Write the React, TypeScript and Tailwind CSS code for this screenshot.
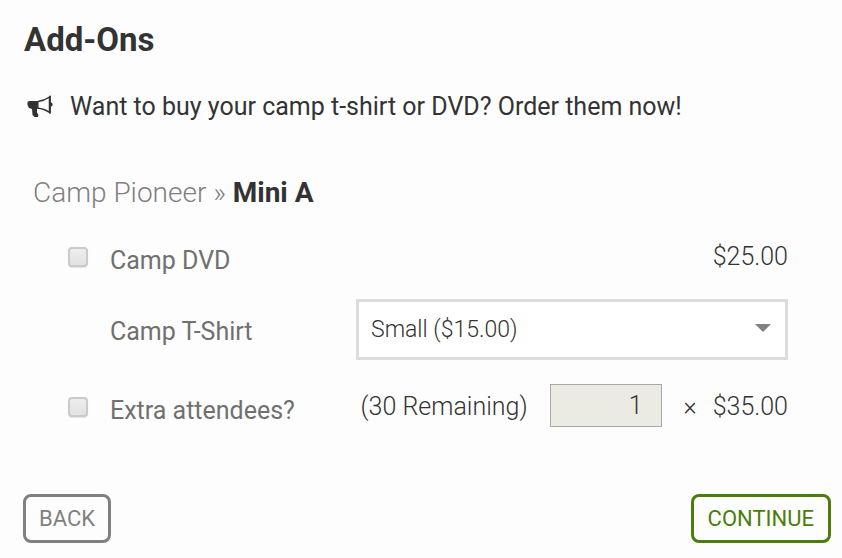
import { useState } from 'react';

const checkboxClass =
  'mt-1.5 h-5 w-5 shrink-0 appearance-none rounded border-2 border-[#cacaca] bg-linear-to-b from-[#ededed] to-[#e2e2e2] shadow-[0_1px_1px_#e4e4e4] checked:border-[#4b7d0c] checked:from-[#4b7d0c] checked:to-[#4b7d0c]';

function MegaphoneIcon() {
  return (
    <svg className="h-6 w-7 shrink-0 text-[#333333]" viewBox="0 0 28 24" fill="none" aria-hidden="true">
      <path
        d="M3 6h9.500v7.500L11 14v3.500l1.500 2.500-.5 2H8.500L6.500 20 6 14l-3-1-1.500-3V7z"
        fill="currentColor"
      />
      <path d="M12 6.500C16.500 6 20 4.500 23.500 2v15.500c-3.500-2.500-7-4-11.500-4.200" stroke="currentColor" strokeWidth="1.500" />
      <path d="M24 .8v17.700" stroke="currentColor" strokeWidth="1.800" />
      <path d="M24.500 7.500h1c1.500.5 1.500 3.500 0 4h-1z" fill="currentColor" />
    </svg>
  );
}

export default function App() {
  const [dvd, setDvd] = useState(false);
  const [extra, setExtra] = useState(false);
  const [shirt, setShirt] = useState('small');
  const [quantity, setQuantity] = useState('1');

  return (
    <main className="min-h-screen bg-[#fdfdfd] pt-5 pr-[11px] pb-3 pl-[23px] font-['Roboto',sans-serif] text-[#333333]">
      <h1 className="pl-px text-[33px] leading-10 font-bold">Add-Ons</h1>

      <p className="mt-7 flex items-center gap-4 pl-[3px] text-[25px] leading-[38px]">
        <MegaphoneIcon />
        Want to buy your camp t-shirt or DVD? Order them now!
      </p>

      <form onSubmit={(e) => e.preventDefault()}>
        <h2 className="mt-[47px] pl-[10px] text-[28px] leading-10 font-light text-[#808080]">
          Camp Pioneer » <strong className="font-bold text-[#333333]">Mini A</strong>
        </h2>

        <div className="pr-[43px] pl-[45px] text-[25px] leading-8">
          {/* Camp DVD */}
          <div className="mt-7 flex items-start justify-between">
            <div className="flex items-start gap-[22px]">
              <input
                id="dvd"
                type="checkbox"
                className={checkboxClass}
                checked={dvd}
                onChange={(e) => setDvd(e.target.checked)}
              />
              <label htmlFor="dvd" className="pt-1 text-[#707070]">
                Camp DVD
              </label>
            </div>
            <span className="font-light">$25.00</span>
          </div>

          {/* Camp T-Shirt */}
          <div className="mt-[22px] flex items-center gap-4">
            <label htmlFor="shirt" className="w-[230px] shrink-0 pt-1 pl-[42px] text-[#707070]">
              Camp T-Shirt
            </label>
            <div className="relative ml-auto max-w-[432px] flex-1">
              <select
                id="shirt"
                className="block w-full appearance-none border-3 border-[#dcdcdc] bg-white px-3 pt-3 pb-[11px] text-[23px] leading-8 font-light text-[#333333]"
                value={shirt}
                onChange={(e) => setShirt(e.target.value)}
              >
                <option value="small">Small ($15.00)</option>
                <option value="medium">Medium ($15.00)</option>
                <option value="large">Large ($15.00)</option>
              </select>
              <svg
                className="pointer-events-none absolute top-[25px] right-[17px] h-2 w-4 text-[#808080]"
                viewBox="0 0 16 8"
                aria-hidden="true"
              >
                <path d="M0 0h16L8 8z" fill="currentColor" />
              </svg>
            </div>
          </div>

          {/* Extra attendees */}
          <div className="mt-6 flex items-center justify-between">
            <div className="flex items-start gap-[22px] pt-1.5">
              <input
                id="extra"
                type="checkbox"
                className={checkboxClass}
                checked={extra}
                onChange={(e) => setExtra(e.target.checked)}
              />
              <label htmlFor="extra" className="pt-1 text-[#707070]">
                Extra attendees?
              </label>
            </div>
            <div className="flex items-center font-light">
              <span className="pt-0.5">(30 Remaining)</span>
              <input
                type="text"
                inputMode="numeric"
                aria-label="Number of extra attendees"
                className="mx-[22px] h-[43px] w-28 border border-[#a9a9a9] bg-[#ebebe4] px-[18px] text-right"
                value={quantity}
                onChange={(e) => setQuantity(e.target.value)}
              />
              <span className="pt-0.5">×</span>
              <span className="pt-0.5 pl-4">$35.00</span>
            </div>
          </div>
        </div>

        <div className="mt-[67px] flex justify-between text-[22px] leading-7">
          <button type="button" className="rounded-lg border-3 border-[#808080] px-[13px] pt-2 pb-[7px] text-[#808080]">
            BACK
          </button>
          <button type="submit" className="rounded-lg border-3 border-[#4b7d0c] px-[14px] pt-2 pb-[7px] text-[#4b7d0c]">
            CONTINUE
          </button>
        </div>
      </form>
    </main>
  );
}
